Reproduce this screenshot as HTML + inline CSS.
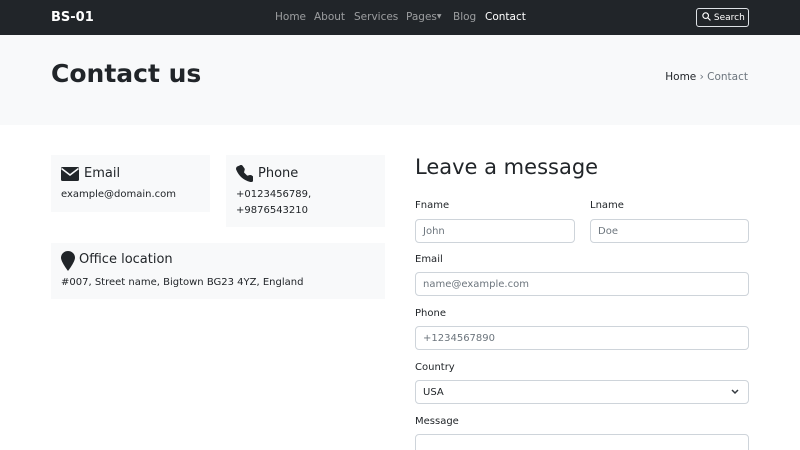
<!DOCTYPE html>
<html><head><meta charset="utf-8"><style>
*{box-sizing:border-box;margin:0;padding:0}
html,body{width:800px;height:450px;overflow:hidden}
body{font-family:"DejaVu Sans","Liberation Sans",sans-serif;color:#212529;background:#fff;position:relative}
.a{position:absolute;white-space:nowrap}
nav{position:absolute;left:0;top:0;width:800px;height:35px;background:#212529}
.nl{color:rgba(255,255,255,.55);font-size:10.5px;top:11px}
.hdr{position:absolute;left:0;top:35px;width:800px;height:90px;background:#f8f9fa}
.card{position:absolute;background:#f8f9fa}
.ct{font-size:13px;top:11px}
.cb{font-size:10px;line-height:16px}
.lbl{font-size:10px}
.in{position:absolute;border:1px solid #ced4da;border-radius:4px;height:24px;font-size:10px;color:#6c757d;padding:6px 7px;background:#fff}
</style></head><body>
<nav>
<div class="a" style="left:51px;top:10px;color:#fff;font-weight:bold;font-size:13px">BS-01</div>
<div class="a nl" style="left:275px">Home</div>
<div class="a nl" style="left:314px">About</div>
<div class="a nl" style="left:354px">Services</div>
<div class="a nl" style="left:406px">Pages<span style="font-size:6px;vertical-align:2px">▼</span></div>
<div class="a nl" style="left:453px">Blog</div>
<div class="a nl" style="left:485px;color:#fff">Contact</div>
<div class="a" style="left:696px;top:8px;width:53px;height:19px;border:1px solid #dee2e6;border-radius:3px;color:#fff;font-size:9px;padding:3px 0 0 5px">
<svg width="9" height="9" viewBox="0 0 16 16" style="vertical-align:-1px"><circle cx="6.5" cy="6.5" r="5" stroke="#fff" stroke-width="2" fill="none"/><path d="M10 10l5 5" stroke="#fff" stroke-width="2"/></svg> Search</div>
</nav>
<div class="hdr">
<div class="a" style="left:51px;top:24px;font-size:25px;font-weight:bold">Contact us</div>
<div class="a" style="right:52px;top:36px;font-size:10.5px">Home <span style="color:#6c757d">›&nbsp;Contact</span></div>
</div>
<div class="card" style="left:51px;top:155px;width:159px;height:57px">
<svg class="a" style="left:10px;top:12px" width="18" height="14" viewBox="0 0 18 14"><rect x="0" y="0" width="18" height="14" rx="1.5" fill="#212529"/><path d="M0.5 1.5L9 8L17.5 1.5" stroke="#f8f9fa" stroke-width="1.6" fill="none"/></svg>
<div class="a ct" style="left:33px">Email</div>
<div class="a cb" style="left:10px;top:32px">example@domain.com</div>
</div>
<div class="card" style="left:226px;top:155px;width:159px;height:72px">
<svg class="a" style="left:10px;top:10px" width="17" height="17" viewBox="0 0 16 16"><path fill="#212529" d="M3.6.4a1.7 1.7 0 0 1 2.5.2l1.8 2.4c.3.4.4 1 .3 1.5l-.6 2.2a.7.7 0 0 0 .2.6l2.5 2.5a.7.7 0 0 0 .6.2l2.2-.6c.5-.1 1.1 0 1.5.3l2.4 1.8c.8.6.9 1.9.2 2.6l-1.1 1.1c-.8.8-2 1.1-3 .7A19.6 19.6 0 0 1 .2 4.5c-.4-1-.1-2.2.7-3z"/></svg>
<div class="a ct" style="left:32px">Phone</div>
<div class="a cb" style="left:10px;top:32px">+0123456789,<br>+9876543210</div>
</div>
<div class="card" style="left:51px;top:243px;width:334px;height:56px">
<svg class="a" style="left:10px;top:8px" width="14" height="20" viewBox="0 0 14 20"><path fill="#212529" d="M7 0C3.1 0 0 3 0 6.8 0 11 7 20 7 20s7-9 7-13.2C14 3 10.9 0 7 0z"/></svg>
<div class="a ct" style="left:28px;top:9px">Office location</div>
<div class="a cb" style="left:10px;top:32px">#007, Street name, Bigtown BG23 4YZ, England</div>
</div>
<div class="a" style="left:415px;top:155px;font-size:21px">Leave a message</div>
<div class="a lbl" style="left:415px;top:200px">Fname</div>
<div class="a lbl" style="left:590px;top:200px">Lname</div>
<div class="in" style="left:415px;top:219px;width:160px">John</div>
<div class="in" style="left:590px;top:219px;width:159px">Doe</div>
<div class="a lbl" style="left:415px;top:254px">Email</div>
<div class="in" style="left:415px;top:272px;width:334px">name@example.com</div>
<div class="a lbl" style="left:415px;top:308px">Phone</div>
<div class="in" style="left:415px;top:326px;width:334px">+1234567890</div>
<div class="a lbl" style="left:415px;top:362px">Country</div>
<div class="in" style="left:415px;top:380px;width:334px;color:#212529">USA<svg class="a" style="right:9px;top:8px" width="8" height="6" viewBox="0 0 8 6"><path d="M1 1l3 3 3-3" stroke="#343a40" stroke-width="1.5" fill="none"/></svg></div>
<div class="a lbl" style="left:415px;top:416px">Message</div>
<div class="in" style="left:415px;top:434px;width:334px;height:30px"></div>
</body></html>
